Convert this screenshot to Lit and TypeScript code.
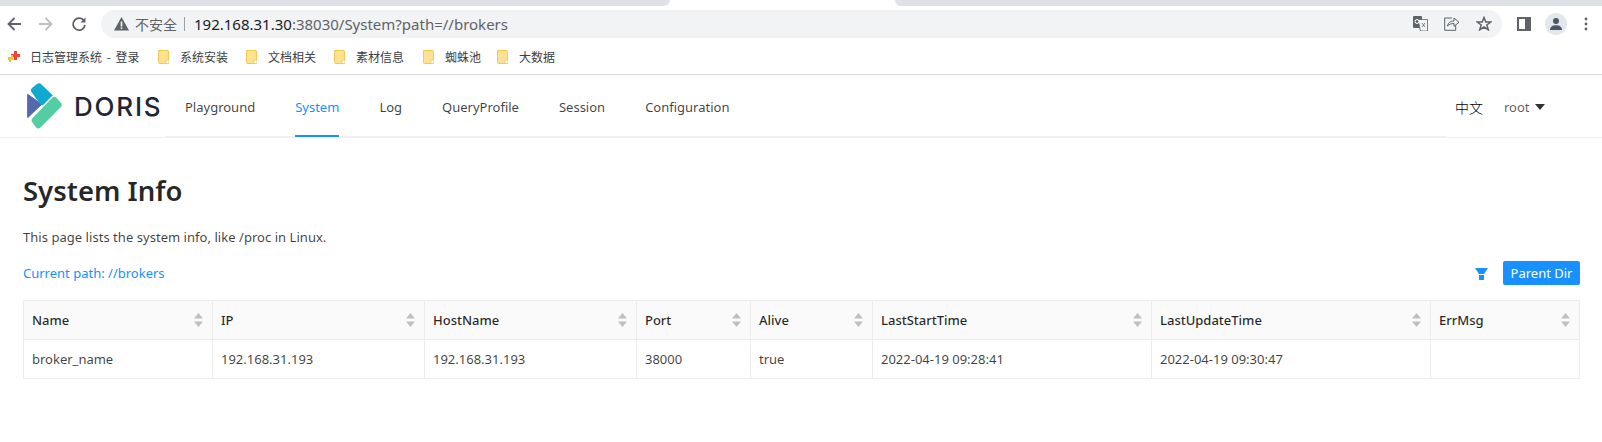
import { LitElement, html, css, svg } from "lit";
import { customElement } from "lit/decorators.js";

const cols = [
  ["Name", 189, "broker_name"],
  ["IP", 212, "192.168.31.193"],
  ["HostName", 212, "192.168.31.193"],
  ["Port", 114, "38000"],
  ["Alive", 122, "true"],
  ["LastStartTime", 279, "2022-04-19 09:28:41"],
  ["LastUpdateTime", 279, "2022-04-19 09:30:47"],
  ["ErrMsg", 149, ""],
] as const;

const marks = ["日志管理系统 - 登录", "系统安装", "文档相关", "素材信息", "蜘蛛池", "大数据"];
const nav = ["Playground", "System", "Log", "QueryProfile", "Session", "Configuration"];

const folder = svg`<svg class="folder" width="11" height="14" viewBox="0 0 11 14"><path d="M.5.5h9a1 1 0 0 1 1 1v12h-9a1 1 0 0 1-1-1z" fill="#fde293" stroke="#f2c94c"/><rect x="8" y="10" width="3" height="3.5" fill="#fff" stroke="#f2c94c" stroke-width=".8"/></svg>`;

@customElement("app-root")
export class AppRoot extends LitElement {
  static styles = css`
    :host { display: block; width: 1602px; height: 442px; overflow: hidden; background: #fff; font-family: "Noto Sans", "Noto Sans CJK SC", sans-serif; color: rgba(0,0,0,.65); font-size: 13px; }
    .tabs { height: 6px; display: flex; gap: 225px; }
    .tabs div { background: #dee1e6; }
    .tabs .l { width: 670px; border-radius: 0 0 6px 0; }
    .tabs .r { flex: 1; border-radius: 0 0 0 6px; }
    .toolbar { height: 35px; display: flex; align-items: center; gap: 4px; background: #fff; }
    .tb { width: 28px; height: 24px; display: flex; align-items: center; justify-content: center; flex: none; }
    .tb.reload { padding-left: 2px; box-sizing: border-box; }
    .omni { width: 1401px; height: 28px; margin-left: 5px; border-radius: 14px; background: #f1f3f4; display: flex; align-items: center; padding-left: 13px; box-sizing: border-box; flex: none; }
    .warn { margin-right: 6px; }
    .insecure { font-family: "Noto Sans CJK SC", sans-serif; font-size: 14px; color: #5f6368; padding-right: 7px; border-right: 1px solid #9aa0a6; line-height: 14px; margin-right: 9px; }
    .url { font-size: 15px; color: #5f6368; }
    .url b { font-weight: 400; color: #202124; }
    .omni .sp { flex: 1; }
    .omni svg.i { margin-right: 16px; }
    .omni svg.i:last-child { margin-right: 10px; }
    .right { display: flex; align-items: center; margin-left: 11px; gap: 14px; }
    .avatar { width: 22px; height: 22px; border-radius: 50%; background: #e3e6ea; display: flex; align-items: center; justify-content: center; margin-right: 3px; }
    .bookmarks { height: 34px; box-sizing: border-box; display: flex; align-items: center; padding: 0 0 2px 7px; border-bottom: 1px solid #dadada; font-family: "Noto Sans CJK SC", sans-serif; font-size: 12px; color: #3c4043; }
    .mark { display: flex; align-items: center; width: 88px; flex: none; gap: 11px; }
    .mark:first-child { width: 151px; gap: 9px; word-spacing: 2px; }
    .mark:nth-child(4) { width: 89px; }
    .mark:nth-child(5) { width: 74px; }

    .header { height: 63px; display: flex; border-bottom: 1px solid #f0f0f0; box-sizing: border-box; }
    .logo { width: 165px; flex: none; display: flex; align-items: center; padding-left: 27px; box-sizing: border-box; gap: 12px; }
    .brand { font-family: "Inter", "Liberation Sans", sans-serif; font-weight: 500; font-size: 26px; letter-spacing: 1.8px; color: #1f2636; }
    .menu { width: 1282px; flex: none; display: flex; height: 61px; border-bottom: 1px solid #f0f0f0; }
    .menu a { margin: 0 20px; line-height: 65px; height: 61px; color: rgba(0,0,0,.75); box-sizing: border-box; }
    .menu a.on { color: #1890ff; border-bottom: 2px solid #1890ff; height: 62px; }
    .user { display: flex; align-items: center; gap: 21px; padding: 2px 0 0 8px; height: 61px; box-sizing: border-box; }
    .zh { color: #000; font-size: 14px; font-family: "Noto Sans CJK SC", sans-serif; font-weight: 300; }
    .root { display: flex; align-items: center; gap: 5px; }

    .content { padding: 34px 22px 0 23px; }
    h1 { margin: 0; font-size: 27.5px; line-height: 38px; font-weight: 600; color: rgba(0,0,0,.85); }
    .desc { margin: 17px 0 0; line-height: 20px; color: rgba(0,0,0,.75); letter-spacing: .04px; }
    .bar { display: flex; align-items: center; height: 24px; margin-top: 14px; color: #1890ff; }
    .bar .sp { flex: 1; }
    .filter { margin-top: 2px; }
    .btn { background: #1890ff; color: #fff; height: 24px; line-height: 24px; width: 77px; text-align: center; border-radius: 2px; margin-left: 15px; }
    .table { margin-top: 15px; width: 1557px; border: solid #ececec; border-width: 1px 0 0 1px; box-sizing: border-box; }
    .row { display: flex; height: 39px; }
    .cell { border: solid #ececec; border-width: 0 1px 1px 0; box-sizing: border-box; padding: 0 8px; display: flex; align-items: center; justify-content: space-between; flex: none; color: rgba(0,0,0,.75); }
    .row.head .cell { background: #fafafa; color: rgba(0,0,0,.85); font-weight: 500; }
    .sorter { display: block; margin-right: 1px; }
    .logo-mark { flex: none; }
  `;

  render() {
    return html`
      <div class="tabs"><div class="l"></div><div class="r"></div></div>
      <div class="toolbar">
        <div class="tb"><svg width="16" height="16" viewBox="0 0 16 16"><path d="M15 8H3M8.500 2 2.500 8l6 6" fill="none" stroke="#5f6368" stroke-width="1.800"/></svg></div>
        <div class="tb"><svg width="16" height="16" viewBox="0 0 16 16"><path d="M1 8h12M7.500 2l6 6-6 6" fill="none" stroke="#bdc1c6" stroke-width="1.800"/></svg></div>
        <div class="tb reload"><svg width="16" height="16" viewBox="0 0 16 16"><path d="M13.300 5.200A6 6 0 1 0 14 9" fill="none" stroke="#5f6368" stroke-width="1.800"/><path d="M14.500 1.500v5h-5z" fill="#5f6368"/></svg></div>
        <div class="omni">
          <svg class="warn" width="15" height="14" viewBox="0 0 15 14"><path d="M7.500 0 15 13.500H0z" fill="#5f6368"/><rect x="6.700" y="4.500" width="1.600" height="5" fill="#f1f3f4"/><rect x="6.700" y="10.300" width="1.600" height="1.600" fill="#f1f3f4"/></svg>
          <span class="insecure">不安全</span>
          <span class="url"><b>192.168.31.30</b>:38030/System?path=//brokers</span>
          <span class="sp"></span>
          <svg class="i" width="15" height="15" viewBox="0 0 15 15"><rect x="0" y="0" width="9" height="12" rx="1" fill="#5f6368"/><path d="M5 3.500h9.500V15H7.500z" fill="#f1f3f4" stroke="#5f6368" stroke-width=".8"/><path d="M9 7l3 4M12 7l-3 4" stroke="#5f6368" stroke-width=".8"/><circle cx="4" cy="5.500" r="2" fill="none" stroke="#fff"/></svg>
          <svg class="i" width="16" height="15" viewBox="0 0 16 15"><path d="M8 2H.7v12.300h11V9" fill="none" stroke="#5f6368"/><path d="M3.500 10C4 6.500 6.500 5 10 5V2l5 4.300-5 4V7.500c-3 0-5 .8-6.500 2.500z" fill="none" stroke="#5f6368"/></svg>
          <svg class="i" width="16" height="15" viewBox="0 0 16 15"><path d="M8 1.500 9.800 6h4.900l-3.900 3 1.500 4.800L8 11l-4.300 2.800L5.200 9 1.300 6h4.900z" fill="none" stroke="#5f6368" stroke-width="1.500"/></svg>
        </div>
        <div class="right">
          <svg width="14" height="14" viewBox="0 0 14 14"><rect x="1" y="1" width="12" height="12" fill="none" stroke="#5f6368" stroke-width="2"/><rect x="8" y="1" width="5" height="12" fill="#5f6368"/></svg>
          <div class="avatar"><svg width="14" height="14" viewBox="0 0 14 14"><circle cx="7" cy="4" r="3" fill="#4a5568"/><path d="M1 13c0-3.500 3-4.700 6-4.700s6 1.200 6 4.700z" fill="#4a5568"/></svg></div>
          <svg width="4" height="14" viewBox="0 0 4 14"><circle cx="2" cy="2" r="1.400" fill="#5f6368"/><circle cx="2" cy="7" r="1.400" fill="#5f6368"/><circle cx="2" cy="12" r="1.400" fill="#5f6368"/></svg>
        </div>
      </div>
      <div class="bookmarks">
        ${marks.map((m, i) => html`<div class="mark">
          ${i === 0
            ? svg`<svg width="14" height="14" viewBox="0 0 14 14"><path d="M7 1h3v3h3v3h-3v3H7V7H4V4h3z" fill="#f44336"/><path d="M1 7h3V5h2v5H4v2H2v-2H1z" fill="#fbc02d"/></svg>`
            : folder}
          <span>${m}</span></div>`)}
      </div>
      <div class="header">
        <div class="logo">
          <svg class="logo-mark" width="35" height="46" viewBox="80 14 105 138">
            <path d="M82 48 124 78 82 118z" fill="#5468b0" stroke="#5468b0" stroke-width="3" stroke-linejoin="round"/>
            <path d="M102 36 116 25 148 56 126 70z" fill="#12a9cf" stroke="#12a9cf" stroke-width="20" stroke-linejoin="round"/>
            <path d="M162 66 174 80 114 140 104 126z" fill="#fff" stroke="#fff" stroke-width="28" stroke-linejoin="round"/>
            <path d="M162 66 174 80 114 140 104 126z" fill="#55cda2" stroke="#55cda2" stroke-width="20" stroke-linejoin="round"/>
          </svg>
          <span class="brand">DORIS</span>
        </div>
        <div class="menu">
          ${nav.map((n) => html`<a class=${n === "System" ? "on" : ""}>${n}</a>`)}
        </div>
        <div class="user">
          <span class="zh">中文</span>
          <span class="root">root <svg width="10" height="6" viewBox="0 0 10 6"><path d="M0 0h10L5 6z" fill="#333"/></svg></span>
        </div>
      </div>
      <div class="content">
        <h1>System Info</h1>
        <p class="desc">This page lists the system info, like /proc in Linux.</p>
        <div class="bar">
          <span>Current path: //brokers</span>
          <span class="sp"></span>
          <svg class="filter" width="13" height="12" viewBox="0 0 13 12"><path d="M0 0h13L9 6H4z" fill="#1890ff"/><rect x="4" y="7" width="5" height="5" fill="#1890ff"/></svg>
          <span class="btn">Parent Dir</span>
        </div>
        <div class="table">
          <div class="row head">
            ${cols.map((c) => html`<div class="cell" style="width:${c[1]}px"><span>${c[0]}</span>
              <svg class="sorter" width="9" height="14" viewBox="0 0 9 14"><path d="M4.500 0 9 5.500H0z" fill="#bfbfbf"/><path d="M4.500 14 9 8.500H0z" fill="#bfbfbf"/></svg></div>`)}
          </div>
          <div class="row">
            ${cols.map((c) => html`<div class="cell" style="width:${c[1]}px"><span>${c[2]}</span></div>`)}
          </div>
        </div>
      </div>
    `;
  }
}
